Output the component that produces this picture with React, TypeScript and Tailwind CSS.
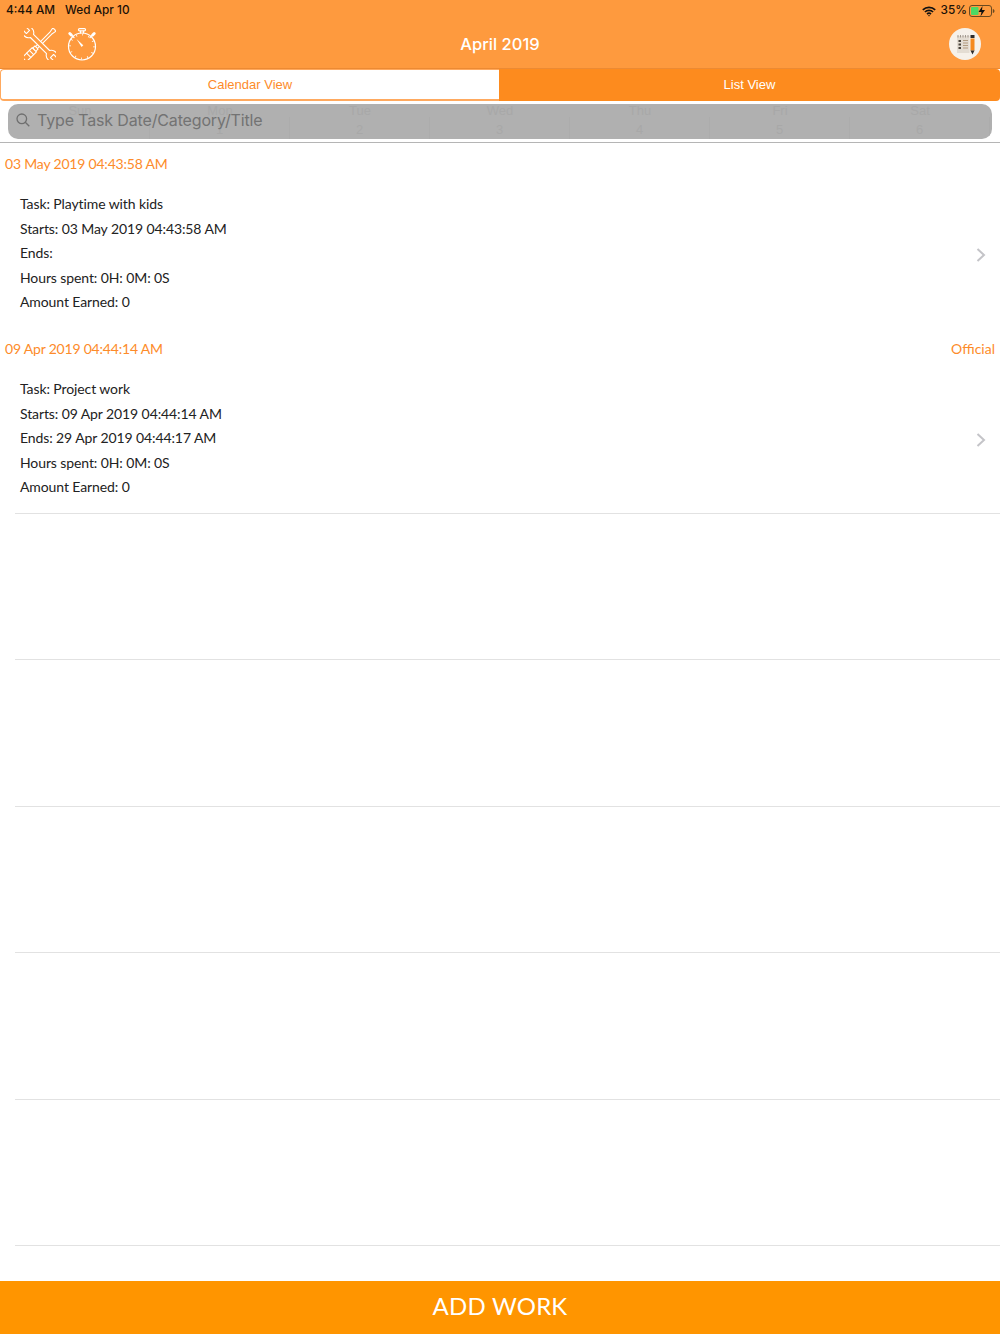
const tasks = [
  {
    date: "03 May 2019 04:43:58 AM",
    category: "",
    lines: ["Task: Playtime with kids", "Starts: 03 May 2019 04:43:58 AM", "Ends:", "Hours spent: 0H: 0M: 0S", "Amount Earned: 0"],
  },
  {
    date: "09 Apr 2019 04:44:14 AM",
    category: "Official",
    lines: ["Task: Project work", "Starts: 09 Apr 2019 04:44:14 AM", "Ends: 29 Apr 2019 04:44:17 AM", "Hours spent: 0H: 0M: 0S", "Amount Earned: 0"],
  },
];

const ToolsIcon = () => (
  <svg width="32" height="32" viewBox="0 0 32 32" fill="#fe9a3e" stroke="white" strokeWidth="1.1" strokeLinejoin="round" strokeLinecap="round">
    {/* screwdriver, tip to the top right */}
    <g transform="translate(16 16) rotate(-45)">
      <path d="M-6 -1.3H15L20 -2.2Q21.5 0 20 2.2L15 1.3H-6Z" />
      <path d="M-8 -3H-20Q-22 -3 -22 0Q-22 3 -20 3H-8Z" />
      <path d="M-8 -2.2H-5V2.2H-8Z" />
      <path d="M-12 -3V3M-16 -3V3" />
    </g>
    {/* double open-end wrench */}
    <g transform="translate(16 16) rotate(45)">
      <path d="M-11.4 -2.2H11.4A6 6 0 0 1 22 -2.2L17 -2.2V2.2L22 2.2A6 6 0 0 1 11.4 2.2H-11.4A6 6 0 0 1 -22 2.2L-17 2.2V-2.2L-22 -2.2A6 6 0 0 1 -11.4 -2.2Z" />
    </g>
  </svg>
);

const StopwatchIcon = () => (
  <svg width="30" height="33" viewBox="0 0 30 33" fill="none" stroke="white" strokeWidth="1.2" strokeLinecap="round">
    <circle cx="15" cy="18.5" r="13.5" />
    <circle cx="15" cy="18.5" r="12" strokeDasharray="0.8 5.48" strokeLinecap="butt" strokeWidth="2" />
    <rect x="11.5" y="0.6" width="7" height="2.2" rx="1" />
    <path d="M13.5 3v2M16.5 3v2" />
    <path d="M2.8 5.5l1.500 1.500M27.2 5.5L25.7 7" strokeWidth="3" />
    <path d="M5 7.5l2 2M25 7.5l-2 2" />
    <path d="M9.5 11l6.800 6.300-1.700 1.700z" fill="white" stroke="none" />
  </svg>
);

const NotesIcon = () => (
  <svg width="32" height="32" viewBox="0 0 32 32">
    <circle cx="16" cy="16" r="16" fill="#f6f1ea" />
    <rect x="8" y="8" width="12.5" height="17" fill="#e4ddd3" />
    <path d="M9 7v2.500M11.5 7v2.500M14 7v2.500M16.5 7v2.500M19 7v2.500" stroke="#8d8478" strokeWidth="0.8" />
    <path d="M9.5 13h2.500M9.5 16.5h2.500M9.5 20h2.500" stroke="#4a443c" strokeWidth="1.8" />
    <path d="M14 12.5h5M14 15h5M14 17.5h5M14 20h5" stroke="#b39c80" strokeWidth="1.2" />
    <rect x="21.5" y="7" width="4" height="3" fill="#2b2b2b" />
    <rect x="21.5" y="10.5" width="4" height="12" fill="#f58a1f" />
    <path d="M21.5 22.5h4l-2 4z" fill="#2b2b2b" />
  </svg>
);

const WifiIcon = () => (
  <svg width="14" height="11" viewBox="0 0 14 11" fill="none" stroke="#111" strokeWidth="1.7">
    <path d="M.8 3.800a9 9 0 0 1 12.400 0M2.900 6a6 6 0 0 1 8.200 0M5 8.100a3 3 0 0 1 4 0" />
    <path d="M5.800 9.200L7 10.600l1.200-1.400z" fill="#111" stroke="none" />
  </svg>
);

const BatteryIcon = () => (
  <svg width="26" height="12" viewBox="0 0 26 12">
    <rect x=".5" y=".5" width="22" height="11" rx="2.5" fill="none" stroke="#6b4a20" />
    <rect x="2" y="2" width="7.5" height="8" rx="1" fill="#4cd964" />
    <path d="M23.800 4v4c1 0 1.700-1 1.700-2s-.7-2-1.700-2z" fill="#6b4a20" />
    <path d="M13.500 1L9.500 7h3l-1 4.500L16 5h-3z" fill="#111" />
  </svg>
);

const CalendarGhost = () => (
  <div className="absolute inset-0 pointer-events-none overflow-hidden text-[13px] text-[#a8a8a8] font-['Liberation_Sans',sans-serif]">
    <div className="grid grid-cols-7 text-center ml-[2px] w-[980px]">
      {["Sun", "Mon", "Tue", "Wed", "Thu", "Fri", "Sat"].map((d) => (
        <span key={d} className="h-[13px] leading-[13px]">{d}</span>
      ))}
      {["", "1", "2", "3", "4", "5", "6"].map((d, i) => (
        <span key={i} className="h-[22px] pt-[5px] leading-[16px] border-r border-[#acacac]">{d}</span>
      ))}
    </div>
  </div>
);

const TaskSection = ({ task }: { task: (typeof tasks)[number] }) => (
  <div>
    <div className="h-[42px] px-[5px] pb-[2px] flex items-center justify-between text-[14px] tracking-[-0.2px] text-[#fd8b2a]">
      <span>{task.date}</span>
      <span className="tracking-normal">{task.category}</span>
    </div>
    <div className="h-[143px] pl-5 pr-3 pb-[8px] flex items-center justify-between">
      <div className="flex flex-col gap-[5.5px] text-[14px] tracking-[-0.1px] leading-[19px] text-[#222]">
        {task.lines.map((line) => (
          <span key={line}>{line}</span>
        ))}
      </div>
      <svg width="10" height="14" viewBox="0 0 10 14" fill="none" stroke="#c4c4c8" strokeWidth="2" className="mt-[4px] mr-[2px]">
        <path d="M1.500 1l6.500 6-6.500 6" />
      </svg>
    </div>
  </div>
);

export default function App() {
  return (
    <div className="w-[1000px] h-[1334px] flex flex-col bg-white overflow-hidden font-['Lato',sans-serif]">
      <header className="h-[69px] shrink-0 bg-[#fe9a3e] border-b border-[#ec8a33] flex flex-col">
        <div className="h-[20px] pt-[2px] flex items-center justify-between pr-[5px] pl-[6px] text-[11.8px] font-medium text-[#1b1208] font-['Inter',sans-serif]">
          <div className="flex gap-[10px]">
            <span>4:44 AM</span>
            <span>Wed Apr 10</span>
          </div>
          <div className="flex items-center gap-[2px]">
            <span className="mr-[3px]"><WifiIcon /></span>
            <span>35%</span>
            <BatteryIcon />
          </div>
        </div>
        <div className="flex-1 flex items-center justify-between pl-[24px] pr-[19px] relative">
          <div className="flex items-center gap-[11px]">
            <ToolsIcon />
            <StopwatchIcon />
          </div>
          <span className="absolute left-0 right-0 text-center text-[16.5px] font-medium text-white font-['Inter',sans-serif]">April 2019</span>
          <NotesIcon />
        </div>
      </header>

      <div className="h-[32px] shrink-0 flex text-[13px] font-['Liberation_Sans',sans-serif]">
        <div className="w-[499px] bg-white border border-b-2 border-r-0 border-[#ffa95e] rounded-l-[4px] flex items-center justify-center text-[#fd8b2a]">Calendar View</div>
        <div className="flex-1 bg-[#fd8b1e] rounded-r-[4px] flex items-center justify-center text-white">List View</div>
      </div>

      <div className="h-[42px] shrink-0 px-2 pt-[3px] border-b border-[#b5b5b5]">
        <div className="relative h-[35px] rounded-[10px] bg-[#b0b0b0] overflow-hidden flex items-center pl-[8px] pb-[3px] gap-[7px]">
          <CalendarGhost />
          <svg width="14" height="14" viewBox="0 0 14 14" fill="none" stroke="#6f6f6f" strokeWidth="1.3" className="relative">
            <circle cx="5.8" cy="5.8" r="4.8" />
            <path d="M9.300 9.300l4 4" />
          </svg>
          <span className="relative text-[16px] tracking-[-0.15px] text-[#737373] font-['Inter',sans-serif]">Type Task Date/Category/Title</span>
        </div>
      </div>

      <main className="flex-1 flex flex-col">
        {tasks.map((task) => (
          <TaskSection key={task.date} task={task} />
        ))}
        <div className="ml-[15px] border-t border-[#e2e2e2]">
          {[0, 1, 2, 3, 4].map((i) => (
            <div key={i} className="h-[146.4px] border-b border-[#e2e2e2]" />
          ))}
        </div>
      </main>

      <button className="h-[53px] shrink-0 pb-[4px] bg-[#ff9500] text-white text-[24px] tracking-[0.2px]">ADD WORK</button>
    </div>
  );
}
